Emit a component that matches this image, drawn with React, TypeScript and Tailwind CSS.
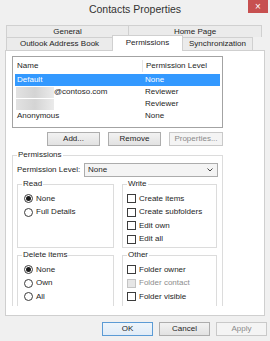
import type { ReactNode } from 'react'

function Tab({ label, className }: { label: string; className: string }) {
  return (
    <div
      className={`flex items-center justify-center border-t border-l border-r border-[#d0d0d0] bg-[#ebebeb] ${className}`}
    >
      {label}
    </div>
  )
}

function Button({ label, disabled, isDefault, className }: { label: string; disabled?: boolean; isDefault?: boolean; className: string }) {
  let look = 'border-[#adadad] bg-gradient-to-b from-[#f2f2f2] to-[#e2e2e2] text-[#1e1e1e]'
  if (disabled) look = 'border-[#c9c9c9] bg-[#f4f4f4] text-[#8a8a8a]'
  if (isDefault) look = 'border-[#5b9bd5] bg-gradient-to-b from-[#eef5fb] to-[#e1ecf7] text-[#1e1e1e]'
  return (
    <div className={`h-[14px] flex items-center justify-center border ${look} ${className}`}>
      {label}
    </div>
  )
}

// fieldset padding shifts the legend too, so padding goes on the inner div
function Group({ title, className, inner, children }: { title: string; className?: string; inner?: string; children: ReactNode }) {
  return (
    <fieldset className={`border border-[#dcdcdc] ${className ?? ''}`}>
      <legend className="ml-[4px] px-[1px] leading-[10px]">{title}</legend>
      <div className={inner}>{children}</div>
    </fieldset>
  )
}

function Radio({ label, checked }: { label: string; checked?: boolean }) {
  return (
    <div className="h-[13.5px] flex items-center gap-[3px]">
      <span className="w-[9px] h-[9px] rounded-full border border-[#3c3c3c] bg-white flex items-center justify-center">
        {checked && <span className="w-[5px] h-[5px] rounded-full bg-[#1a1a1a]" />}
      </span>
      <span>{label}</span>
    </div>
  )
}

function Check({ label, disabled }: { label: string; disabled?: boolean }) {
  return (
    <div className="h-[13.5px] flex items-center gap-[3px]">
      <span
        className={`w-[9px] h-[9px] border ${disabled ? 'border-[#c4c4c4] bg-[#e6e6e6]' : 'border-[#3c3c3c] bg-white'}`}
      />
      <span className={disabled ? 'text-[#8d8d8d]' : ''}>{label}</span>
    </div>
  )
}

function Blur() {
  return <div className="w-[38px] h-[11px] bg-gradient-to-r from-[#e2e2e2] via-[#d4d4d4] to-[#ebebeb]" />
}

export default function App() {
  return (
    <div className="w-[270px] h-[341px] bg-[#f0f0f0] font-['Liberation_Sans',Arial,sans-serif] text-[8px] text-[#1e1e1e] flex flex-col overflow-hidden">
      {/* Title bar */}
      <div className="h-[21px] flex items-start">
        <div className="w-[22px]" />
        <div className="flex-1 text-center text-[10.5px] text-[#333] pt-[2px]">Contacts Properties</div>
        <div className="w-[20px] h-[13px] mr-[2px] bg-[#c75050] text-white text-[10px] leading-[13px] text-center">
          ×
        </div>
      </div>

      {/* Tabs */}
      <div className="pt-[4px] pl-[6px]">
        <div className="flex h-[12px]">
          <Tab label="General" className="w-[123px]" />
          <Tab label="Home Page" className="w-[134px] -ml-px" />
        </div>
        <div className="flex h-[13px] items-end">
          <Tab label="Outlook Address Book" className="w-[107px] h-[13px]" />
          <div className="relative z-10 w-[71px] h-[16px] -mb-px -ml-px flex items-center justify-center border-t border-l border-r border-[#d0d0d0] bg-white pb-[2px]">
            Permissions
          </div>
          <Tab label="Synchronization" className="w-[71px] h-[13px] -ml-px" />
        </div>
      </div>

      {/* Panel */}
      <div className="mx-[5px] h-[266px] border border-[#cfcfcf] bg-white pb-[9px] flex flex-col">
        <div className="flex-1 overflow-hidden pl-[6px] pt-[5px]">
          <div className="w-[211px] h-[72px] border border-[#a3a3a3] pt-[3px] px-[2px]">
            <div className="h-[12px] flex items-center">
              <div className="w-[127px] pl-[2px]">Name</div>
              <div className="h-full border-l border-[#e6e6e6] pl-[3px] flex items-center">Permission Level</div>
            </div>
            <div className="mt-[2px] h-[12px] flex items-center bg-[#3399ff] text-white">
              <div className="w-[130px] pl-[2px]">Default</div>
              <div>None</div>
            </div>
            <div className="h-[12px] flex items-center">
              <div className="w-[130px] pl-[1px] flex items-center">
                <Blur />
                <span>@contoso.com</span>
              </div>
              <div>Reviewer</div>
            </div>
            <div className="h-[12px] flex items-center">
              <div className="w-[130px] pl-[1px]">
                <Blur />
              </div>
              <div>Reviewer</div>
            </div>
            <div className="h-[12px] flex items-center">
              <div className="w-[130px] pl-[2px]">Anonymous</div>
              <div>None</div>
            </div>
          </div>

          <div className="w-[211px] mt-[4px] flex justify-end gap-[8px]">
            <Button label="Add..." className="w-[53px]" />
            <Button label="Remove" className="w-[53px]" />
            <Button label="Properties..." disabled className="w-[54px]" />
          </div>

          <Group title="Permissions" className="w-[211px] mt-[4px] h-[200px]" inner="px-[4px]">
            <div className="mt-[3px] h-[14px] flex items-center">
              <div className="w-[67px]">Permission Level:</div>
              <div className="flex-1 h-full border border-[#acacac] bg-[#f4f4f4] flex items-center pl-[3px] pr-[4px]">
                <span className="flex-1">None</span>
                <svg width="6" height="4" viewBox="0 0 6 4">
                  <polyline points="0.5,0.5 3,3 5.5,0.5" fill="none" stroke="#444" strokeWidth="1" />
                </svg>
              </div>
            </div>

            <div className="mt-[2px] grid grid-cols-[97px_95px] gap-x-[8px]">
              <Group title="Read" inner="pl-[6px] pt-[3px] pb-[1px]">
                <Radio label="None" checked />
                <Radio label="Full Details" />
              </Group>
              <Group title="Write" inner="pl-[4px] pt-[3px] pb-[1px]">
                <Check label="Create items" />
                <Check label="Create subfolders" />
                <Check label="Edit own" />
                <Check label="Edit all" />
              </Group>
            </div>

            <div className="mt-[2px] grid grid-cols-[97px_95px] gap-x-[8px]">
              <Group title="Delete items" className="h-[80px]" inner="pl-[6px] pt-[3px]">
                <Radio label="None" checked />
                <Radio label="Own" />
                <Radio label="All" />
              </Group>
              <Group title="Other" className="h-[80px]" inner="pl-[4px] pt-[3px]">
                <Check label="Folder owner" />
                <Check label="Folder contact" disabled />
                <Check label="Folder visible" />
              </Group>
            </div>
          </Group>
        </div>
      </div>

      {/* Dialog buttons */}
      <div className="mt-[6px] pr-[3px] flex justify-end gap-[6px]">
        <Button label="OK" isDefault className="w-[51px]" />
        <Button label="Cancel" className="w-[51px]" />
        <Button label="Apply" disabled className="w-[51px]" />
      </div>
    </div>
  )
}
